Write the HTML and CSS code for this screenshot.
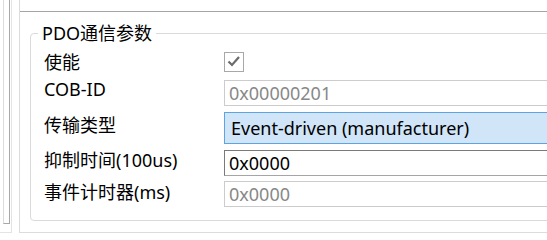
FILE: index.html
```html
<!DOCTYPE html>
<html lang="zh-CN">
<head>
<meta charset="utf-8">
<title>PDO通信参数</title>
<link rel="stylesheet" href="styles.css">
</head>
<body>
<div class="frame">
  <div class="side"><div class="side-inner"></div></div>
  <div class="main">
    <div class="tabline"></div>
    <fieldset class="group">
      <legend class="legend">PDO通信参数</legend>
      <div class="rows">
        <div class="label">使能</div>
        <div class="cell">
          <span class="check">
            <svg width="18" height="18" viewBox="0 0 18 18"><path d="M3.5 8.5 L7 12 L14 4" fill="none" stroke="#6b6b6b" stroke-width="2.2"/></svg>
          </span>
        </div>
        <div class="label">COB-ID</div>
        <div class="cell"><div class="field disabled r2">0x00000201</div></div>
        <div class="label">传输类型</div>
        <div class="cell"><div class="field combo r3">Event-driven (manufacturer)</div></div>
        <div class="label">抑制时间(100us)</div>
        <div class="cell"><div class="field edit r4">0x0000</div></div>
        <div class="label">事件计时器(ms)</div>
        <div class="cell"><div class="field disabled r5">0x0000</div></div>
      </div>
    </fieldset>
  </div>
</div>
</body>
</html>
```

FILE: styles.css
```css
html, body {
  margin: 0;
  padding: 0;
  background: #ffffff;
  overflow: hidden;
}
body {
  width: 547px;
  height: 240px;
  font-family: "Noto Sans", "Noto Sans CJK SC", sans-serif;
  font-size: 18px;
  color: #000000;
}
.frame {
  display: flex;
  align-items: flex-start;
}
.side {
  width: 11px;
  height: 232px;
  border-right: 1px solid #e3e3e3;
  border-bottom: 1px solid #e3e3e3;
  flex: none;
}
.side-inner {
  margin-left: 3px;
  width: 5px;
  height: 223px;
  border-left: 1px solid #dcdcdc;
  border-right: 1px solid #a8a8a8;
  border-bottom: 1px solid #a8a8a8;
}
.main {
  margin-left: 7px;
  flex: 1;
  min-width: 0;
  height: 232px;
  border-left: 1px solid #dcdcdc;
  border-bottom: 1px solid #dcdcdc;
  overflow: hidden;
}
.tabline {
  height: 11px;
  border-bottom: 1px solid #a5a5a5;
}
.group {
  margin: 9px 0 0 10px;
  padding: 0;
  width: 600px;
  min-width: 0;
  border: 1px solid #dadada;
  border-radius: 4px;
}
.legend {
  margin-left: 7px;
  padding: 0 4px;
  height: 24px;
  line-height: 24px;
}
.rows {
  display: grid;
  grid-template-columns: 180px 1fr;
  align-items: center;
  padding: 7px 0 13px 13px;
}
.label {
  height: 20px;
  line-height: 20px;
  white-space: nowrap;
}
.cell {
  display: flex;
  align-items: center;
}
.check {
  width: 18px;
  height: 18px;
  border: 1px solid #a8a8a8;
  display: flex;
}
.field {
  flex: 1;
  box-sizing: border-box;
  height: 26px;
  line-height: 24px;
  padding-left: 4px;
  white-space: nowrap;
  border: 1px solid #cccccc;
}
.disabled {
  color: #888888;
}
.edit {
  border-color: #7a7a7a #a5a5a5 #a5a5a5 #7a7a7a;
}
.combo {
  height: 32px;
  line-height: 30px;
  padding-left: 6px;
  background: #d0e5f8;
  border-color: #5ea3e2;
}
.r2 { margin-top: 8px; }
.r3 { margin-top: 6px; }
.r4 { margin-top: 6px; }
.r5 { margin-top: 5px; }
```
